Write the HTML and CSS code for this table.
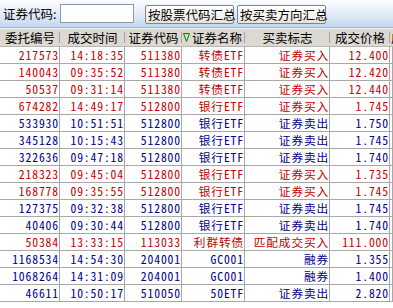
FILE: index.html
```html
<!DOCTYPE html>
<html lang="zh-CN">
<head>
<meta charset="utf-8">
<title>成交查询</title>
<link rel="stylesheet" href="styles.css">
</head>
<body>
<div class="toolbar">
  <span class="lbl">证券代码:</span>
  <input class="code" type="text">
  <button class="btn btn-first">按股票代码汇总</button>
  <button class="btn">按买卖方向汇总</button>
</div>
<div class="grid">
  <div class="row head">
    <div class="hc">委托编号</div>
    <div class="hc">成交时间</div>
    <div class="hc">证券代码</div>
    <div class="hc sorted"><svg class="tri" width="7" height="9" viewBox="0 0 7 9"><polygon points="0.5,0.5 6.5,0.5 3.5,8.5" fill="none" stroke="#008000" stroke-width="1"/></svg><span>证券名称</span></div>
    <div class="hc">买卖标志</div>
    <div class="hc">成交价格</div>
    <div class="hc last">成</div>
  </div>
  <div class="row red"><div class="c">217573</div><div class="c">14:18:35</div><div class="c">511380</div><div class="c">转债ETF</div><div class="c">证券买入</div><div class="c">12.400</div><div class="c"></div></div>
  <div class="row red"><div class="c">140043</div><div class="c">09:35:52</div><div class="c">511380</div><div class="c">转债ETF</div><div class="c">证券买入</div><div class="c">12.420</div><div class="c"></div></div>
  <div class="row red"><div class="c">50537</div><div class="c">09:31:14</div><div class="c">511380</div><div class="c">转债ETF</div><div class="c">证券买入</div><div class="c">12.440</div><div class="c"></div></div>
  <div class="row red"><div class="c">674282</div><div class="c">14:49:17</div><div class="c">512800</div><div class="c">银行ETF</div><div class="c">证券买入</div><div class="c">1.745</div><div class="c"></div></div>
  <div class="row blue"><div class="c">533930</div><div class="c">10:51:51</div><div class="c">512800</div><div class="c">银行ETF</div><div class="c">证券卖出</div><div class="c">1.750</div><div class="c"></div></div>
  <div class="row blue"><div class="c">345128</div><div class="c">10:15:43</div><div class="c">512800</div><div class="c">银行ETF</div><div class="c">证券卖出</div><div class="c">1.745</div><div class="c"></div></div>
  <div class="row blue"><div class="c">322636</div><div class="c">09:47:18</div><div class="c">512800</div><div class="c">银行ETF</div><div class="c">证券卖出</div><div class="c">1.740</div><div class="c"></div></div>
  <div class="row red"><div class="c">218323</div><div class="c">09:45:04</div><div class="c">512800</div><div class="c">银行ETF</div><div class="c">证券买入</div><div class="c">1.735</div><div class="c"></div></div>
  <div class="row red"><div class="c">168778</div><div class="c">09:35:55</div><div class="c">512800</div><div class="c">银行ETF</div><div class="c">证券买入</div><div class="c">1.745</div><div class="c"></div></div>
  <div class="row blue"><div class="c">127375</div><div class="c">09:32:38</div><div class="c">512800</div><div class="c">银行ETF</div><div class="c">证券卖出</div><div class="c">1.745</div><div class="c"></div></div>
  <div class="row blue"><div class="c">40406</div><div class="c">09:30:44</div><div class="c">512800</div><div class="c">银行ETF</div><div class="c">证券卖出</div><div class="c">1.740</div><div class="c"></div></div>
  <div class="row red"><div class="c">50384</div><div class="c">13:33:15</div><div class="c">113033</div><div class="c">利群转债</div><div class="c">匹配成交买入</div><div class="c">111.000</div><div class="c"></div></div>
  <div class="row blue"><div class="c">1168534</div><div class="c">14:54:30</div><div class="c">204001</div><div class="c">GC001</div><div class="c">融券</div><div class="c">1.355</div><div class="c"></div></div>
  <div class="row blue"><div class="c">1068264</div><div class="c">14:31:09</div><div class="c">204001</div><div class="c">GC001</div><div class="c">融券</div><div class="c">1.400</div><div class="c"></div></div>
  <div class="row blue"><div class="c">46611</div><div class="c">10:50:17</div><div class="c">510050</div><div class="c">50ETF</div><div class="c">证券卖出</div><div class="c">2.820</div><div class="c"></div></div>
</div>
</body>
</html>
```
FILE: styles.css
```css
html, body {
  margin: 0;
  padding: 0;
  background: #ffffff;
  overflow: hidden;
}
body {
  width: 393px;
  height: 308px;
  font-family: "Noto Sans CJK SC", "Noto Sans", sans-serif;
  color: #000;
}
.toolbar {
  height: 28px;
  box-sizing: border-box;
  display: flex;
  align-items: center;
  padding-left: 3px;
  background: linear-gradient(#fbfdff 0%, #e6eef8 45%, #c3d8ef 100%);
  border-bottom: 1px solid #9fb4cc;
}
.lbl {
  font-size: 12.5px;
  line-height: 14px;
  width: 57px;
  white-space: nowrap;
}
.code {
  width: 74px;
  height: 19px;
  box-sizing: border-box;
  margin: 0;
  padding: 0;
  border: 1px solid #8a98a8;
  background: #fff;
  outline: none;
}
.btn {
  height: 19px;
  box-sizing: border-box;
  margin: 1px 0 0 3px;
  padding: 0 2px;
  width: 89px;
  border: 1px solid #7d858d;
  border-radius: 2px;
  background: linear-gradient(#fefefe, #f1f0ea 70%, #e2e0d8);
  font-family: "Noto Sans CJK SC", sans-serif;
  font-size: 12.5px;
  line-height: 15px;
  color: #000;
  white-space: nowrap;
}
.btn-first {
  margin-left: 11px;
}
.grid {
  width: 393px;
  overflow: hidden;
}
.row {
  display: grid;
  grid-template-columns: 60px 65px 57px 63px 85px 60px 1fr;
  height: 17px;
  box-sizing: border-box;
  border-bottom: 1px solid #a8a8a8;
}
.row.head {
  height: 19px;
  background: #dcd9d2;
  border-top: 1px solid #f4f3ef;
  border-bottom: 1px solid #b9b6ae;
}
.hc {
  font-size: 12.5px;
  line-height: 17px;
  text-align: center;
  white-space: nowrap;
  background-image: linear-gradient(#a9a59d, #a9a59d);
  background-repeat: no-repeat;
  background-position: right center;
  background-size: 1px 11px;
}
.hc.sorted {
  display: flex;
  align-items: center;
  justify-content: flex-start;
  padding-left: 1px;
  gap: 2px;
}
.hc.last {
  text-align: left;
  padding-left: 1px;
  background-image: none;
  overflow: hidden;
}
.tri {
  display: block;
  flex: none;
}
.c {
  box-sizing: border-box;
  border-right: 1px solid #a8a8a8;
  text-align: right;
  padding-right: 0;
  font-size: 11.7px;
  letter-spacing: 0.85px;
  line-height: 16px;
  font-feature-settings: "hwid" 1;
  white-space: nowrap;
}
.red .c {
  color: #c40000;
}
.blue .c {
  color: #00008c;
}
```
